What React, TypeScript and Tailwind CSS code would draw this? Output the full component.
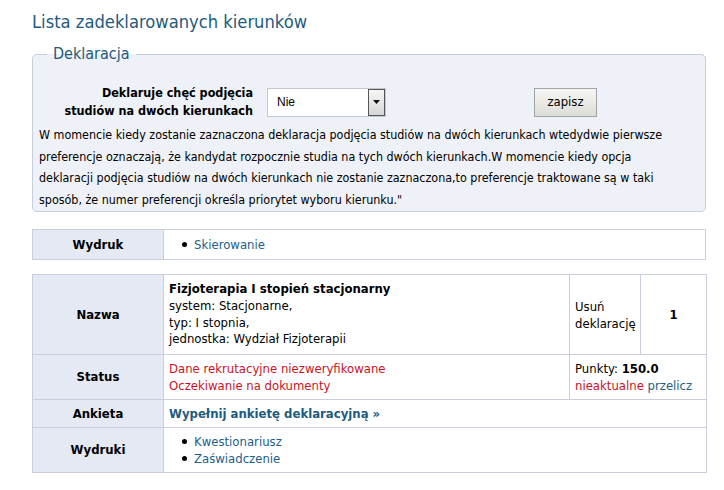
import React from "react";

const F = { fontFamily: '"DejaVu Sans Condensed", "DejaVu Sans", sans-serif' };

function Bullet({ children }: { children: React.ReactNode }) {
  return (
    <div className="flex items-center">
      <span className="ml-[13px] mr-[7px] w-[5px] h-[5px] rounded-full bg-black" />
      <a className="text-[#22608c]">{children}</a>
    </div>
  );
}

export default function App() {
  const lab = "bg-[#e4e9f3] border border-[#c8cde0] font-bold text-center text-black align-middle";
  const cell = "border border-[#c8cde0] align-middle px-[5px]";
  return (
    <div className="bg-white w-[724px] h-[490px] pl-[32px] pr-[18px] pt-[9px] text-[13px] text-black" style={F}>
      <h1 className="text-[18.2px] leading-[26px] text-[#1d5b80] font-normal">Lista zadeklarowanych kierunków</h1>
      <fieldset className="mt-[9px] border border-[#c6cfdb] rounded-[5px] bg-[#eef1f7] px-[6px] pb-[1px] pt-0">
        <legend className="ml-[8px] px-[6px] text-[16px] leading-[20px] text-[#1d5b80]">Deklaracja</legend>
        <div className="flex items-center mt-[20px] h-[36px]">
          <div className="w-[214px] text-right font-bold text-[12.5px] leading-[18px]">
            Deklaruje chęć podjęcia<br />studiów na dwóch kierunkach
          </div>
          <div className="ml-[14px] w-[119px] h-[29px] bg-white border border-[#c3c7cf] flex items-center">
            <span className="flex-1 pl-[9px] text-[12px]" style={{ fontFamily: '"Liberation Sans", Arial, sans-serif' }}>Nie</span>
            <span className="w-[17px] h-[27px] border border-[#555] bg-gradient-to-b from-[#f6f6f6] to-[#d6d6d6] flex items-center justify-center">
              <svg width="7" height="4" viewBox="0 0 7 4"><path d="M0 0h7L3.5 4z" fill="#111" /></svg>
            </span>
          </div>
          <button className="ml-[148px] w-[63px] h-[29px] border border-[#a3a3a3] bg-gradient-to-b from-[#f7f7f5] to-[#dcdcd8] text-[13px] text-black">
            zapisz
          </button>
        </div>
        <p className="mt-[4px] text-[12.4px] leading-[21.5px] pr-[12px]">
          W momencie kiedy zostanie zaznaczona deklaracja podjęcia studiów na dwóch kierunkach wtedydwie pierwsze preferencje oznaczają, że kandydat rozpocznie studia na tych dwóch kierunkach.W momencie kiedy opcja deklaracji podjęcia studiów na dwóch kierunkach nie zostanie zaznaczona,to preferencje traktowane są w taki sposób, że numer preferencji określa priorytet wyboru kierunku."
        </p>
      </fieldset>

      <table className="mt-[17px] w-[674px] border-collapse table-fixed">
        <colgroup>
          <col className="w-[131px]" />
          <col />
        </colgroup>
        <tbody>
          <tr className="h-[30px]">
            <td className={lab}>Wydruk</td>
            <td className={cell}><Bullet>Skierowanie</Bullet></td>
          </tr>
        </tbody>
      </table>

      <table className="mt-[14px] w-[674px] border-collapse table-fixed">
        <colgroup>
          <col className="w-[131px]" />
          <col className="w-[406px]" />
          <col className="w-[71px]" />
          <col className="w-[66px]" />
        </colgroup>
        <tbody>
          <tr className="h-[80px]">
            <td className={lab}>Nazwa</td>
            <td className={cell + " leading-[16.7px]"}>
              <div className="font-bold">Fizjoterapia I stopień stacjonarny</div>
              <div>system: Stacjonarne,</div>
              <div>typ: I stopnia,</div>
              <div>jednostka: Wydział Fizjoterapii</div>
            </td>
            <td className={cell + " leading-[17px]"}>Usuń<br />deklarację</td>
            <td className={cell + " text-center font-bold"}>1</td>
          </tr>
          <tr className="h-[45px]">
            <td className={lab}>Status</td>
            <td className={cell + " leading-[17px] text-[#d0101e]"}>
              <div>Dane rekrutacyjne niezweryfikowane</div>
              <div>Oczekiwanie na dokumenty</div>
            </td>
            <td className={cell + " leading-[17px]"} colSpan={2}>
              <div>Punkty: <b>150.0</b></div>
              <div><span className="text-[#d0101e]">nieaktualne</span> <a className="text-[#22608c]">przelicz</a></div>
            </td>
          </tr>
          <tr className="h-[28px]">
            <td className={lab}>Ankieta</td>
            <td className={cell + " font-bold text-[#1d5b80]"} colSpan={3}>Wypełnij ankietę deklaracyjną »</td>
          </tr>
          <tr className="h-[45px]">
            <td className={lab}>Wydruki</td>
            <td className={cell + " leading-[17px]"} colSpan={3}>
              <Bullet>Kwestionariusz</Bullet>
              <Bullet>Zaświadczenie</Bullet>
            </td>
          </tr>
        </tbody>
      </table>
    </div>
  );
}
